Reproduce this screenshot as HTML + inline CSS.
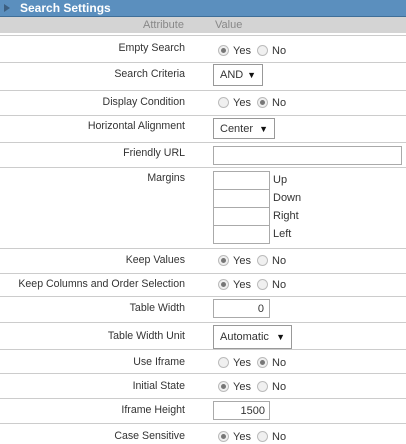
<!DOCTYPE html>
<html><head><meta charset="utf-8"><style>
body{margin:0;width:406px;height:444px;background:#fff;font-family:"Liberation Sans",Arial,sans-serif;font-size:11px;color:#333;position:relative;overflow:hidden}
.a{position:absolute}
.hd{left:0;top:0;width:406px;height:16px;background:#5b8fbe;border-bottom:1px solid #3f6f99}
.hd span{position:absolute;left:20px;top:1px;color:#fff;font-weight:bold;font-size:12px}
.tri{position:absolute;left:4px;top:4px;width:0;height:0;border-left:6px solid #3d5f80;border-top:4px solid transparent;border-bottom:4px solid transparent}
.gr{left:0;top:17px;width:406px;height:16px;background:#d4d4d4}
.ln{left:0;width:406px;height:1px;background:#ccc}
.lb{right:221px;text-align:right;white-space:nowrap;font-size:10.6px}
.v{left:213px;white-space:nowrap}
.r{display:inline-block;width:9px;height:9px;border:1px solid #bbb;border-radius:50%;background:#f0f0f0;vertical-align:-2px;margin-right:4px;position:relative}
.r.on::after{content:"";position:absolute;left:2px;top:2px;width:5px;height:5px;border-radius:50%;background:#777}
.box{border:1px solid #aaa;background:#fff;box-sizing:border-box}
.sel{border:1px solid #999;background:#fff;box-sizing:border-box;font-size:11px;padding-left:6px;line-height:20px}
.sel i{font-style:normal;position:absolute;right:6px;top:0;font-size:9px;color:#111}
</style></head><body>
<div class="a hd"><div class="tri"></div><span>Search Settings</span></div>
<div class="a gr"></div>
<div class="a" style="left:143px;top:19px;color:#888">Attribute</div>
<div class="a" style="left:215px;top:19px;color:#888">Value</div>

<div class="a ln" style="top:35px"></div>
<div class="a ln" style="top:62px"></div>
<div class="a ln" style="top:90px"></div>
<div class="a ln" style="top:115px"></div>
<div class="a ln" style="top:142px"></div>
<div class="a ln" style="top:167px"></div>
<div class="a ln" style="top:248px"></div>
<div class="a ln" style="top:273px"></div>
<div class="a ln" style="top:296px"></div>
<div class="a ln" style="top:322px"></div>
<div class="a ln" style="top:349px"></div>
<div class="a ln" style="top:373px"></div>
<div class="a ln" style="top:398px"></div>
<div class="a ln" style="top:423px"></div>

<div class="a lb" style="top:42px">Empty Search</div>
<div class="a v" style="left:218px;top:45px"><span class="r on"></span>Yes <span class="r" style="margin-left:3px"></span>No</div>

<div class="a lb" style="top:68px">Search Criteria</div>
<div class="a sel" style="left:213px;top:64px;width:50px;height:22px">AND<i>▼</i></div>

<div class="a lb" style="top:96px">Display Condition</div>
<div class="a v" style="left:218px;top:97px"><span class="r"></span>Yes <span class="r on" style="margin-left:3px"></span>No</div>

<div class="a lb" style="top:120px">Horizontal Alignment</div>
<div class="a sel" style="left:213px;top:118px;width:62px;height:21px">Center<i>▼</i></div>

<div class="a lb" style="top:147px">Friendly URL</div>
<div class="a box" style="left:213px;top:146px;width:189px;height:19px"></div>

<div class="a lb" style="top:172px">Margins</div>
<div class="a box" style="left:213px;top:171px;width:57px;height:19px"></div>
<div class="a box" style="left:213px;top:189px;width:57px;height:19px"></div>
<div class="a box" style="left:213px;top:207px;width:57px;height:19px"></div>
<div class="a box" style="left:213px;top:225px;width:57px;height:19px"></div>
<div class="a" style="left:273px;top:174px">Up</div>
<div class="a" style="left:273px;top:192px">Down</div>
<div class="a" style="left:273px;top:210px">Right</div>
<div class="a" style="left:273px;top:228px">Left</div>

<div class="a lb" style="top:254px">Keep Values</div>
<div class="a v" style="left:218px;top:255px"><span class="r on"></span>Yes <span class="r" style="margin-left:3px"></span>No</div>

<div class="a lb" style="top:278px">Keep Columns and Order Selection</div>
<div class="a v" style="left:218px;top:279px"><span class="r on"></span>Yes <span class="r" style="margin-left:3px"></span>No</div>

<div class="a lb" style="top:302px">Table Width</div>
<div class="a box" style="left:213px;top:299px;width:57px;height:19px;text-align:right;padding:3px 5px 0 0">0</div>

<div class="a lb" style="top:330px">Table Width Unit</div>
<div class="a sel" style="left:213px;top:325px;width:79px;height:24px;line-height:23px">Automatic<i style="line-height:22px">▼</i></div>

<div class="a lb" style="top:356px">Use Iframe</div>
<div class="a v" style="left:218px;top:357px"><span class="r"></span>Yes <span class="r on" style="margin-left:3px"></span>No</div>

<div class="a lb" style="top:380px">Initial State</div>
<div class="a v" style="left:218px;top:381px"><span class="r on"></span>Yes <span class="r" style="margin-left:3px"></span>No</div>

<div class="a lb" style="top:404px">Iframe Height</div>
<div class="a box" style="left:213px;top:401px;width:57px;height:19px;text-align:right;padding:3px 4px 0 0">1500</div>

<div class="a lb" style="top:430px">Case Sensitive</div>
<div class="a v" style="left:218px;top:431px"><span class="r on"></span>Yes <span class="r" style="margin-left:3px"></span>No</div>
</body></html>
